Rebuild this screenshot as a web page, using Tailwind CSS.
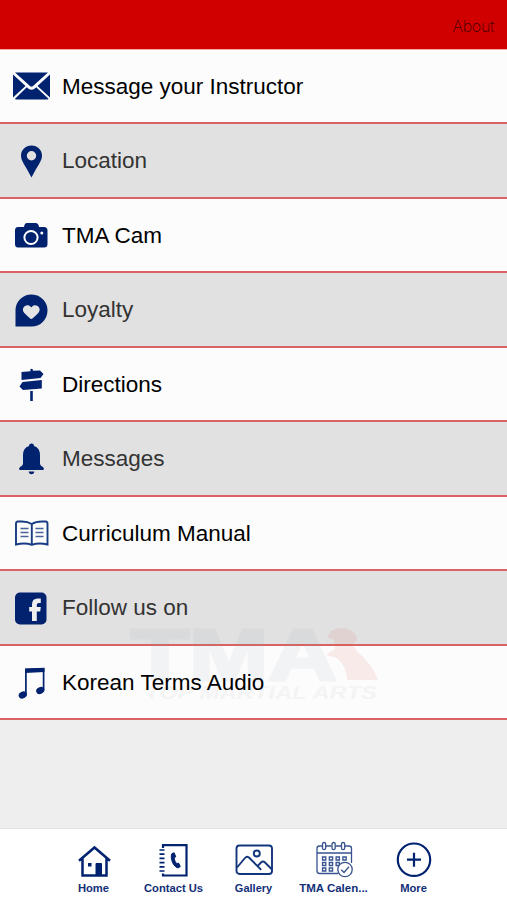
<!DOCTYPE html>
<html lang="en">
<head>
<meta charset="utf-8">
<title>About</title>
<script src="https://cdn.jsdelivr.net/npm/@tailwindcss/browser@4"></script>
</head>
<body class="font-['Liberation_Sans',Arial,sans-serif]">
<div class="relative flex h-[900px] w-[507px] flex-col overflow-hidden bg-[#eeeeee]">
  <header class="flex h-[49px] shrink-0 items-center justify-end bg-[#d00000] pt-[3px] pr-[13px] font-['Inter','Liberation_Sans',sans-serif] text-[16px] font-extralight tracking-[-0.3px] text-black/75">About</header>
  <main class="flex h-[671.4px] shrink-0 flex-col border-t border-[#f4a9a5] text-[22.5px] leading-none text-black">
    <div class="flex flex-1 items-center border-b-2 border-[#da6262] bg-[#fcfcfc]">
      <svg class="ml-3 mr-3 h-[38px] w-[38px] shrink-0" viewBox="0 0 38 38" fill="#00226f"><path d="M3 5.500h33L21 19q-1.500 1.300-3 0zM1 7.500l12.500 11.500L1 30.500zM38 7.500v23L25.500 19zM14.800 20.200l1.700 1.500q3 2.200 6 0l1.700-1.500L36.500 31.700q-.5.800-1 .8H4q-.6 0-1-.8z"/></svg>
      <span class="pt-[2px]">Message your Instructor</span>
    </div>
    <div class="flex flex-1 items-center border-b-2 border-[#da6262] bg-[#e1e1e1] text-[#333]">
      <svg class="ml-3 mr-3 h-[38px] w-[38px] shrink-0" viewBox="0 0 38 38" fill="#00226f"><path fill-rule="evenodd" d="M19.500 3.500C13.500 3.500 9 7.800 9 13.700 9 19 13.500 23.500 19.500 35.500 25.500 23.500 30 19 30 13.700 30 7.800 25.500 3.500 19.500 3.500m0 5.500a4.700 4.700 0 1 1 0 9.400 4.700 4.700 0 0 1 0-9.400"/></svg>
      <span class="pt-[2px]">Location</span>
    </div>
    <div class="flex flex-1 items-center border-b-2 border-[#da6262] bg-[#fcfcfc]">
      <svg class="ml-3 mr-3 h-[38px] w-[38px] shrink-0" viewBox="0 0 38 38" fill="#00226f"><path d="M3 14.500q0-3.500 3-3.500h6q.5-4 3-4h8.500q3 0 3.500 4h5q3.500 0 3.500 3.500v13.500q0 3.500-3.500 3.500H6q-3 0-3-3.500z"/><circle cx="19" cy="21.500" r="6.600" fill="none" stroke="#fff" stroke-width="2"/><circle cx="29.800" cy="17" r="1.500" fill="#fff"/></svg>
      <span class="pt-[2px]">TMA Cam</span>
    </div>
    <div class="flex flex-1 items-center border-b-2 border-[#da6262] bg-[#e1e1e1] text-[#333]">
      <svg class="ml-3 mr-3 h-[38px] w-[38px] shrink-0" viewBox="0 0 38 38" fill="#00226f"><path d="M3.500 35.500V19A16 16 0 1 1 19 35.500z"/><path fill="#e5e5e5" d="M19.300 28q-1 0-7-6c-4.500-5 3-11 7-5.500 4-5.500 11.500.5 7 5.500Q20.300 28 19.300 28"/></svg>
      <span class="pt-[2px]">Loyalty</span>
    </div>
    <div class="flex flex-1 items-center border-b-2 border-[#da6262] bg-[#fcfcfc]">
      <svg class="ml-3 mr-3 h-[38px] w-[38px] shrink-0" viewBox="0 0 38 38" fill="#00226f"><path d="M18.400 4.200q1.200-1 2.400 0v1.500L28 5.500l3.500 3.600-3 3.900L9.500 15V7l8.900-.8zM29.800 15v8.500L11 25l-3.500-3.500 3-4.500zM18.200 26h2.600v10h-2.600z"/></svg>
      <span class="pt-[2px]">Directions</span>
    </div>
    <div class="flex flex-1 items-center border-b-2 border-[#da6262] bg-[#e1e1e1] text-[#333]">
      <svg class="ml-3 mr-3 h-[38px] w-[38px] shrink-0" viewBox="0 0 38 38" fill="#00226f"><path d="M17 6q0-2.500 2.500-2.500T22 6q6 2 6 9v9q.5 1.800 3 3 1.500 1.500.5 3h-24q-1-1.500.5-3 2.500-1.200 3-3v-9q0-7 6-9M16.700 31.500h5.600q-.3 2.800-2.800 2.800t-2.800-2.800"/></svg>
      <span class="pt-[2px]">Messages</span>
    </div>
    <div class="flex flex-1 items-center border-b-2 border-[#da6262] bg-[#fcfcfc]">
      <svg class="ml-3 mr-3 h-[38px] w-[38px] shrink-0" viewBox="0 0 38 38" fill="none" stroke="#173c82" stroke-width="1.900"><path d="M19.800 10Q15 7 8 7.500H6q-2 .2-2 2v21q9-2 15.800.3Q27 28.500 35.500 30.500v-21q0-1.800-2-2h-2.500q-7-.2-11.200 2.500v20.800"/><path d="M8.500 14.500h8M8.500 18.500h8M8.500 22.500h8M23.500 14.500h8M23.500 18.500h8M23.500 22.500h8" stroke="#496397" stroke-width="1.300"/></svg>
      <span class="pt-[2px]">Curriculum Manual</span>
    </div>
    <div class="flex flex-1 items-center border-b-2 border-[#da6262] bg-[#e1e1e1] text-[#333]">
      <svg class="ml-3 mr-3 h-[38px] w-[38px] shrink-0" viewBox="0 0 38 38"><rect x="3" y="3.500" width="31.500" height="32" rx="5" fill="#00226f"/><path fill="#eee" d="M20 32V22.500h-2.800V18H20v-2.500q0-6 5.500-6h3.300V14h-2q-2 0-2 1.800V18h4l-.6 4.500h-3.400V32z"/></svg>
      <span class="pt-[2px]">Follow us on</span>
    </div>
    <div class="flex flex-1 items-center border-b-2 border-[#da6262] bg-[#fcfcfc]">
      <svg class="ml-3 mr-3 h-[38px] w-[38px] shrink-0" viewBox="0 0 38 38"><path d="M13.900 31V6.500l17.700-.7v21" fill="none" stroke="#00226f" stroke-width="1.700"/><path d="M13 5.500l19.500-.7v4.300L13 10z" fill="#00226f"/><ellipse cx="10.800" cy="32" rx="4.300" ry="3.300" transform="rotate(-28 10.800 32)" fill="#00226f"/><ellipse cx="28.300" cy="27.500" rx="4.300" ry="3.300" transform="rotate(-28 28.300 27.500)" fill="#00226f"/></svg>
      <span class="relative z-10 pt-[2px]">Korean Terms Audio</span>
    </div>
  </main>
  <!-- Faint school logo behind the last rows -->
  <svg class="pointer-events-none absolute top-[622px] left-[125px] h-[84px] w-[260px]" viewBox="0 0 260 84" font-family="Liberation Sans, Arial, sans-serif" font-weight="bold">
    <text x="6" y="58" font-size="73" textLength="206" lengthAdjust="spacingAndGlyphs" fill="#8793a5" stroke="#8793a5" stroke-width="3" opacity=".08">TMA</text>
    <path d="M206 9q8-5 17-2 10 4 9 12l-5 3 6 8q14 12 20 28h-31q0-13-10-22l-11-3 9-6-1-9-7-3z" fill="#e05050" opacity=".1"/>
    <text x="20" y="77" font-size="18" font-style="italic" textLength="232" lengthAdjust="spacingAndGlyphs" fill="#777" opacity=".055">TOP MARTIAL ARTS</text>
  </svg>
  <nav class="mt-auto flex h-[72px] shrink-0 justify-center border-t border-[#e2e2e2] bg-white text-[11px] leading-[13px] font-bold text-[#122f78]">
    <a class="flex w-20 flex-col items-center pt-[11px]">
      <svg class="h-10 w-10" viewBox="0 0 40 40" fill="none" stroke="#00226f" stroke-width="2"><path d="M5 20.800L20.500 7.500 36 20.800M8.500 18.500V35.500h24V18.500" stroke-width="2.500"/><path d="M22 23.500h5.500v12H22z" fill="#00226f" stroke-width="1"/><path d="M14 23h3.500v3.500H14z" fill="#00226f" stroke="none"/></svg>
      <span class="mt-[2px] text-[11.2px]">Home</span>
    </a>
    <a class="flex w-20 flex-col items-center pt-[11px]">
      <svg class="h-10 w-10" viewBox="0 0 40 40" fill="none" stroke="#00226f" stroke-width="2.200"><path d="M9 8V5.200h23.500v30.300H9v-2"/><path d="M5.500 10h5M5.500 14.200h5M5.500 18.400h5M5.500 22.600h5M5.500 26.800h5M5.500 31h5" stroke-width="1.700"/><path d="M18 13.500l2.200-.7 1.500 4-1.600 1.400q.6 3.500 2.700 5.500l1.800-.6 1.700 3.400-2.200 1.400c-5.200-1-8.300-10.500-6.100-14.400z" fill="#00226f" stroke-width="1"/></svg>
      <span class="mt-[2px] whitespace-nowrap text-[11.2px]">Contact Us</span>
    </a>
    <a class="flex w-20 flex-col items-center pt-[11px]">
      <svg class="h-10 w-10" viewBox="0 0 40 40" fill="none" stroke="#12367c" stroke-width="1.900"><rect x="2.500" y="5.500" width="35.500" height="28.500" rx="3"/><circle cx="22.800" cy="13.500" r="3"/><path d="M3 27.500L11 18q2.200-2.500 4.500 0l11.700 11.800M23.500 26.200l3.500-3.700q2-2 4 0l7 7"/></svg>
      <span class="mt-[2px]">Gallery</span>
    </a>
    <a class="flex w-20 flex-col items-center pt-[11px]">
      <svg class="h-10 w-10" viewBox="0 0 40 40" fill="none" stroke="#39538f" stroke-width="1.300"><path d="M8.500 6H5.500q-2.500 0-2.500 2.500v22.300Q3 33.500 5.500 33.500H24M11.500 6h6M21.500 6h6M31 6h4q2.500 0 2.500 2.500V23M3 13h34.500"/><rect x="8.500" y="2.500" width="3.200" height="7.200" rx="1.600"/><rect x="18" y="2.500" width="3.200" height="7.200" rx="1.600"/><rect x="27.500" y="2.500" width="3.200" height="7.200" rx="1.600"/><path d="M8.500 17h3.300v3H8.500zM15.300 17h3.300v3h-3.300zM22.100 17h3.300v3h-3.300zM28.900 17h3.300v3h-3.300zM8.500 22.500h3.300v3H8.500zM15.300 22.500h3.300v3h-3.300zM22.100 22.500h3.300v3h-3.300zM8.500 28h3.300v3H8.500zM15.300 28h3.300v3h-3.300z"/><circle cx="31" cy="29.500" r="7.200" fill="#fff"/><path d="M27.200 29.800l2.800 2.700 5-5.700"/></svg>
      <span class="mt-[2px] whitespace-nowrap text-[11.500px]">TMA Calen...</span>
    </a>
    <a class="flex w-20 flex-col items-center pt-[11px]">
      <svg class="h-10 w-10" viewBox="0 0 40 40" fill="none" stroke="#00226f" stroke-width="2.200"><circle cx="20" cy="19.700" r="16.200"/><path d="M13 19.700h14M20 12.700v14"/></svg>
      <span class="mt-[2px] text-[11.2px]">More</span>
    </a>
  </nav>
</div>
</body>
</html>
